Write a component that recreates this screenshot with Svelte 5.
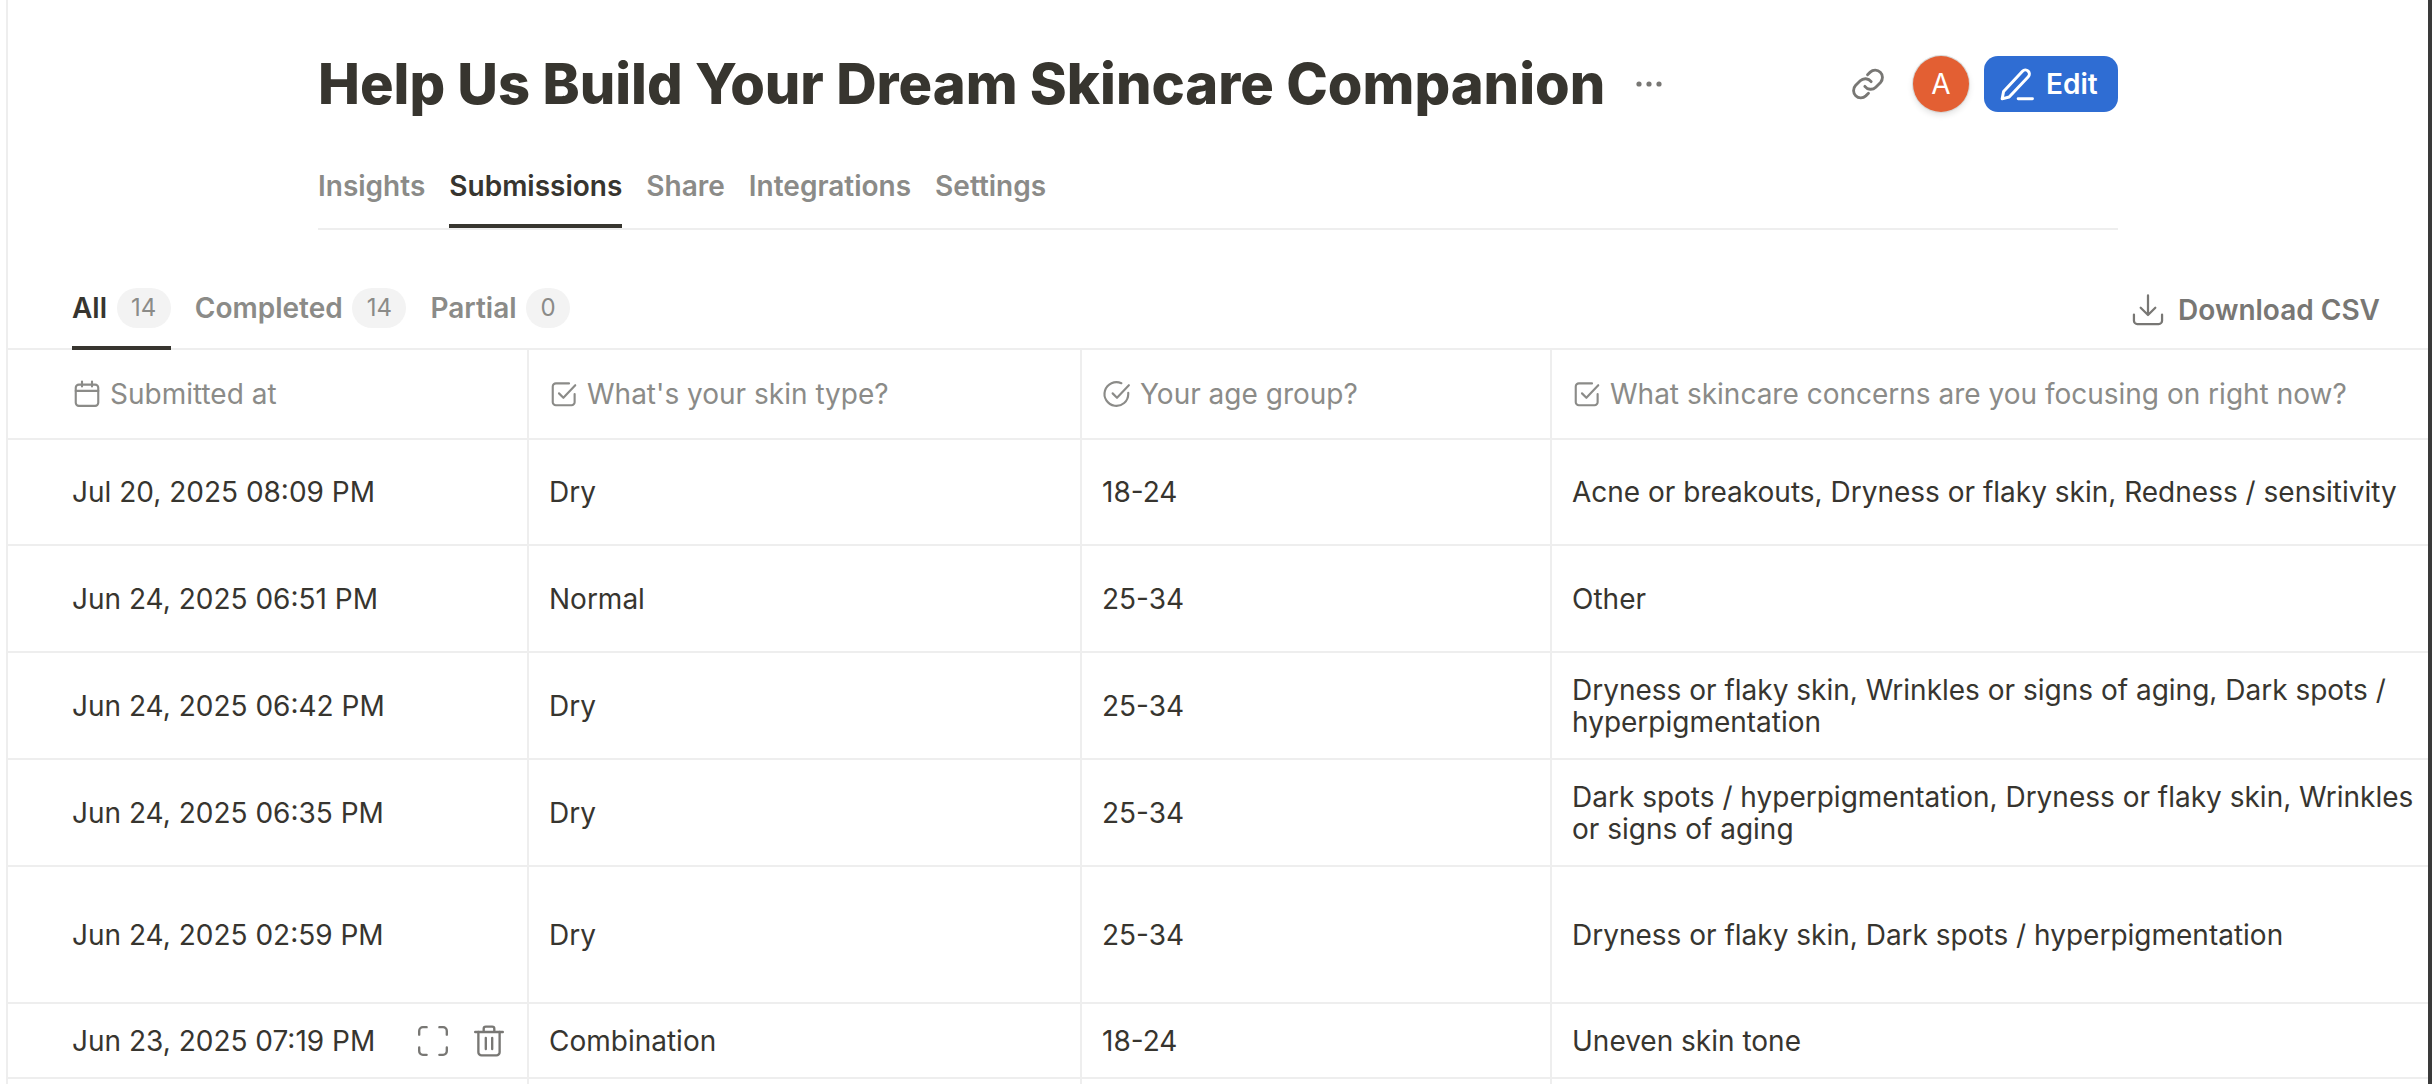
<script lang="ts">
  const navTabs = ['Insights', 'Submissions', 'Share', 'Integrations', 'Settings'];
  const subTabs = [
    { label: 'All', count: 14 },
    { label: 'Completed', count: 14 },
    { label: 'Partial', count: 0 },
  ];
  const columns = [
    { label: 'Submitted at', icon: 'calendar' },
    { label: "What's your skin type?", icon: 'square' },
    { label: 'Your age group?', icon: 'circle' },
    { label: 'What skincare concerns are you focusing on right now?', icon: 'square' },
  ];
  const rows = [
    { at: 'Jul 20, 2025 08:09 PM', skin: 'Dry', age: '18-24', concerns: 'Acne or breakouts, Dryness or flaky skin, Redness / sensitivity', h: 106 },
    { at: 'Jun 24, 2025 06:51 PM', skin: 'Normal', age: '25-34', concerns: 'Other', h: 107 },
    { at: 'Jun 24, 2025 06:42 PM', skin: 'Dry', age: '25-34', concerns: 'Dryness or flaky skin, Wrinkles or signs of aging, Dark spots / hyperpigmentation', h: 107 },
    { at: 'Jun 24, 2025 06:35 PM', skin: 'Dry', age: '25-34', concerns: 'Dark spots / hyperpigmentation, Dryness or flaky skin, Wrinkles or signs of aging', h: 107 },
    { at: 'Jun 24, 2025 02:59 PM', skin: 'Dry', age: '25-34', concerns: 'Dryness or flaky skin, Dark spots / hyperpigmentation', h: 137 },
    { at: 'Jun 23, 2025 07:19 PM', skin: 'Combination', age: '18-24', concerns: 'Uneven skin tone', h: 75, hover: true },
    // next row only shows its top edge in the viewport
    { at: '', skin: '', age: '', concerns: '', h: 75 },
  ];
</script>

<div class="frame">
  <main class="page">
    <header class="head">
      <div class="title-row">
        <h1>Help Us Build Your Dream Skincare Companion</h1>
        <svg class="more" viewBox="0 0 28 8" aria-hidden="true">
          <circle cx="4" cy="4" r="2.6" /><circle cx="14" cy="4" r="2.6" /><circle cx="24" cy="4" r="2.6" />
        </svg>
        <div class="actions">
          <svg class="link" viewBox="0 0 24 24" aria-hidden="true">
            <path d="M10 13.5a4.6 4.6 0 0 0 6.9.5l3-3a4.6 4.6 0 0 0-6.5-6.5l-1.7 1.7" />
            <path d="M14 10.5a4.6 4.6 0 0 0-6.9-.5l-3 3a4.6 4.6 0 0 0 6.5 6.5l1.7-1.7" />
          </svg>
          <div class="avatar">A</div>
          <button class="edit">
            <svg viewBox="0 0 32 32" aria-hidden="true">
              <path d="M3.500 28.500l1.200-6.200L20.600 5.200a3.400 3.400 0 0 1 4.800-.1 3.400 3.400 0 0 1 .1 4.800L9.400 27z" />
              <path d="M17 28.500h12" />
            </svg>
            Edit
          </button>
        </div>
      </div>
      <nav class="nav">
        {#each navTabs as tab}
          <span class="nav-tab" class:active={tab === 'Submissions'}>{tab}</span>
        {/each}
      </nav>
    </header>

    <div class="subbar">
      <div class="subtabs">
        {#each subTabs as tab, i}
          <div class="subtab" class:active={i === 0}>
            <span>{tab.label}</span>
            <span class="badge">{tab.count}</span>
          </div>
        {/each}
      </div>
      <div class="download">
        <svg viewBox="0 0 32 32" aria-hidden="true">
          <path d="M16 3v17M9.500 14l6.500 6.500 6.500-6.500" />
          <path d="M3.500 20v5.500a3 3 0 0 0 3 3h19a3 3 0 0 0 3-3V20" />
        </svg>
        Download CSV
      </div>
    </div>

    <div class="table">
      <div class="row head-row">
        {#each columns as col}
          <div class="cell">
            <svg class="col-icon" viewBox="0 0 24 24" aria-hidden="true">
              {#if col.icon === 'calendar'}
                <rect x="3" y="4.500" width="18" height="17" rx="2.500" />
                <path d="M3 9.500h18M8 2v4M16 2v4" />
              {:else if col.icon === 'square'}
                <path d="M20.500 12v6.500a2.500 2.500 0 0 1-2.500 2.500H5.500A2.500 2.500 0 0 1 3 18.500V6a2.500 2.500 0 0 1 2.500-2.500H16" />
                <path d="M8 11.500l3.500 3.500L21 5" />
              {:else}
                <path d="M21 11v1a9.500 9.500 0 1 1-5.500-8.600" />
                <path d="M8.500 11.500l3.500 3.500L21.500 5" />
              {/if}
            </svg>
            {col.label}
          </div>
        {/each}
      </div>
      {#each rows as row}
        <div class="row" style="height: {row.h}px">
          <div class="cell first">
            <span>{row.at}</span>
            {#if row.hover}
              <div class="row-actions">
                <svg viewBox="0 0 32 32" aria-hidden="true">
                  <path d="M3 10V6.500A3.500 3.500 0 0 1 6.500 3H10M22 3h3.500A3.500 3.500 0 0 1 29 6.500V10M29 22v3.500a3.500 3.500 0 0 1-3.500 3.500H22M10 29H6.500A3.500 3.500 0 0 1 3 25.500V22" />
                </svg>
                <svg viewBox="0 0 32 32" aria-hidden="true">
                  <path d="M3 7.500h26M11 7.500V4.500A2 2 0 0 1 13 2.500h6a2 2 0 0 1 2 2v3" />
                  <path d="M6 7.500v19a3 3 0 0 0 3 3h14a3 3 0 0 0 3-3v-19M13 13v10.500M19 13v10.500" />
                </svg>
              </div>
            {/if}
          </div>
          <div class="cell">{row.skin}</div>
          <div class="cell">{row.age}</div>
          <div class="cell">{row.concerns}</div>
        </div>
      {/each}
    </div>
  </main>
  <div class="edge"></div>
</div>

<style>
  :global(body) {
    margin: 0;
    background: #fff;
    overflow: hidden;
  }

  .frame {
    display: flex;
    height: 1084px;
    overflow: hidden;
    font-family: Inter, 'Liberation Sans', sans-serif;
    color: #37352f;
  }

  .page {
    flex: 1;
    min-width: 0;
    margin-left: 6px;
    border-left: 2px solid #eeeeee;
  }

  .edge {
    width: 4px;
    background: #3a3a3a;
  }

  .head {
    width: 1800px;
    margin-left: 310px;
    padding-top: 56px;
  }

  .title-row {
    display: flex;
    align-items: center;
    height: 56px;
  }

  h1 {
    margin: 0;
    font-size: 56px;
    line-height: 56px;
    font-weight: 800;
    white-space: nowrap;
  }

  .more {
    width: 28px;
    height: 8px;
    margin-left: 30px;
    fill: #787774;
  }

  .actions {
    margin-left: auto;
    display: flex;
    align-items: center;
  }

  .link {
    width: 38px;
    height: 38px;
    fill: none;
    stroke: #787774;
    stroke-width: 1.800;
    stroke-linecap: round;
  }

  .avatar {
    width: 56px;
    height: 56px;
    margin-left: 26px;
    border-radius: 50%;
    background: #e35f33;
    color: #fff;
    font-size: 28px;
    display: flex;
    align-items: center;
    justify-content: center;
    box-shadow: 0 0 0 1px #d8d8d6, 0 3px 6px rgba(0, 0, 0, 0.12);
  }

  .edit {
    display: flex;
    align-items: center;
    gap: 10px;
    height: 56px;
    width: 134px;
    margin-left: 15px;
    padding: 0 0 0 14px;
    border: 0;
    border-radius: 14px;
    background: #2f6dd3;
    color: #fff;
    font: 600 28px Inter, sans-serif;
  }

  .edit svg {
    width: 38px;
    height: 38px;
    fill: none;
    stroke: #fff;
    stroke-width: 2.500;
    stroke-linecap: round;
    stroke-linejoin: round;
  }

  .nav {
    display: flex;
    gap: 24px;
    height: 74px;
    margin-top: 42px;
    border-bottom: 2px solid #eeeeee;
  }

  .nav-tab {
    height: 74px;
    box-sizing: border-box;
    padding-top: 14px;
    font-size: 28px;
    line-height: 36px;
    font-weight: 600;
    color: #8b8b88;
  }

  .nav-tab.active {
    color: #37352f;
    border-bottom: 4px solid #37352f;
  }

  .subbar {
    display: flex;
    align-items: flex-start;
    justify-content: space-between;
    height: 120px;
    box-sizing: border-box;
    padding: 58px 48px 0 64px;
    border-bottom: 2px solid #eeeeee;
  }

  .subtabs {
    display: flex;
    gap: 24px;
    height: 62px;
  }

  .subtab {
    display: flex;
    align-items: flex-start;
    gap: 9.500px;
    height: 62px;
    font-size: 28px;
    line-height: 40px;
    font-weight: 600;
    color: #8b8b88;
  }

  .subtab.active {
    color: #37352f;
    box-shadow: inset 0 -4px 0 #37352f;
  }

  .badge {
    min-width: 40px;
    box-sizing: border-box;
    padding: 0 14.500px;
    height: 40px;
    border-radius: 20px;
    background: #f3f3f3;
    color: #8b8b88;
    font-size: 24px;
    font-weight: 400;
    text-align: center;
  }

  .download {
    display: flex;
    align-items: center;
    gap: 12px;
    height: 40px;
    padding-top: 2px;
    font-size: 28px;
    font-weight: 600;
    color: #787774;
  }

  .download svg {
    width: 36px;
    height: 36px;
    fill: none;
    stroke: #787774;
    stroke-width: 2;
    stroke-linecap: round;
    stroke-linejoin: round;
  }

  .row {
    display: grid;
    grid-template-columns: 521px 553px 470px 876px;
    height: 107px;
    border-bottom: 2px solid #eeeeee;
    box-sizing: border-box;
    font-size: 28px;
    line-height: 32px;
  }

  .head-row {
    height: 90px;
    color: #8b8b88;
  }

  .cell {
    display: flex;
    align-items: center;
    box-sizing: border-box;
    padding-left: 20px;
    padding-right: 14px;
    border-right: 2px solid #eeeeee;
  }

  .cell:first-child {
    padding-left: 64px;
  }

  .cell:last-child {
    border-right: 0;
  }

  .col-icon {
    flex: none;
    width: 30px;
    height: 30px;
    margin-right: 8px;
    fill: none;
    stroke: #8b8b88;
    stroke-width: 1.700;
    stroke-linecap: round;
    stroke-linejoin: round;
  }

  .first {
    justify-content: space-between;
  }

  .row-actions {
    display: flex;
    gap: 22px;
    margin-right: 7px;
  }

  .row-actions svg {
    width: 34px;
    height: 34px;
    fill: none;
    stroke: #787774;
    stroke-width: 2.200;
    stroke-linecap: round;
    stroke-linejoin: round;
  }
</style>
